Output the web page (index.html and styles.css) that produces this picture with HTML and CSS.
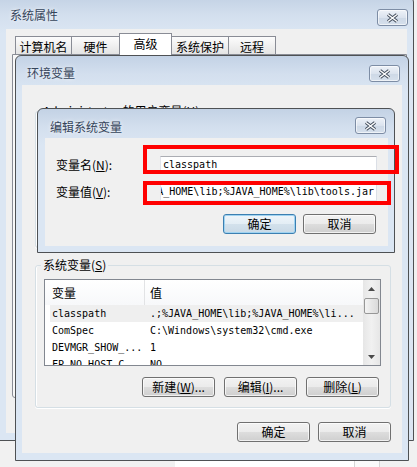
FILE: index.html
```html
<!DOCTYPE html>
<html lang="zh-CN">
<head>
<meta charset="utf-8">
<title>环境变量</title>
<link rel="stylesheet" href="styles.css">
</head>
<body>
<div class="desktop">
  <section class="win win-sys">
    <div class="titlebar">
      <span class="title">系统属性</span>
      <span class="close"><svg width="13" height="10" viewBox="0 0 13 10"><path d="M2 1.5 L11 8.5 M11 1.5 L2 8.5" stroke="#3f4a59" stroke-width="3.4"/><path d="M2 1.5 L11 8.5 M11 1.5 L2 8.5" stroke="#fff" stroke-width="1.5"/></svg></span>
    </div>
    <div class="client sys-client">
      <div class="tabs">
        <span class="tab tab-a">计算机名</span>
        <span class="tab tab-b">硬件</span>
        <span class="tab tab-sel">高级</span>
        <span class="tab tab-c">系统保护</span>
        <span class="tab tab-d">远程</span>
      </div>
      <div class="panel"></div>
    </div>
  </section>

  <section class="win win-env">
    <div class="titlebar">
      <span class="title">环境变量</span>
      <span class="close"><svg width="13" height="10" viewBox="0 0 13 10"><path d="M2 1.5 L11 8.5 M11 1.5 L2 8.5" stroke="#3f4a59" stroke-width="3.4"/><path d="M2 1.5 L11 8.5 M11 1.5 L2 8.5" stroke="#fff" stroke-width="1.5"/></svg></span>
    </div>
    <div class="client env-client">
      <fieldset class="group user-group"><legend>Administrator 的用户变量(<u>U</u>)</legend></fieldset>
      <fieldset class="group sys-group">
        <legend>系统变量(<u>S</u>)</legend>
        <div class="list">
          <div class="list-body">
            <div class="list-head"><span class="hcell hcell-1">变量</span><span class="hcell hcell-2">值</span></div>
            <div class="row row-sel"><span class="cell">classpath</span><span class="cell">.;%JAVA_HOME\lib;%JAVA_HOME%\li...</span></div>
            <div class="row"><span class="cell">ComSpec</span><span class="cell">C:\Windows\system32\cmd.exe</span></div>
            <div class="row"><span class="cell">DEVMGR_SHOW_...</span><span class="cell">1</span></div>
            <div class="row"><span class="cell">FP_NO_HOST_C...</span><span class="cell">NO</span></div>
          </div>
          <div class="scrollbar">
            <span class="sb-btn"><svg width="7" height="4" viewBox="0 0 7 4"><path d="M0 4 L3.5 0 L7 4Z" fill="#4a4a4a"/></svg></span>
            <span class="sb-thumb"></span>
            <span class="sb-track"></span>
            <span class="sb-btn"><svg width="7" height="4" viewBox="0 0 7 4"><path d="M0 0 L3.5 4 L7 0Z" fill="#4a4a4a"/></svg></span>
          </div>
        </div>
        <div class="btnrow group-btns">
          <span class="btn">新建(<u>W</u>)...</span>
          <span class="btn">编辑(<u>I</u>)...</span>
          <span class="btn">删除(<u>L</u>)</span>
        </div>
      </fieldset>
      <div class="btnrow footer-btns">
        <span class="btn">确定</span>
        <span class="btn">取消</span>
      </div>
    </div>
  </section>

  <section class="win win-edit">
    <div class="titlebar">
      <span class="title">编辑系统变量</span>
      <span class="close"><svg width="13" height="10" viewBox="0 0 13 10"><path d="M2 1.5 L11 8.5 M11 1.5 L2 8.5" stroke="#3f4a59" stroke-width="3.4"/><path d="M2 1.5 L11 8.5 M11 1.5 L2 8.5" stroke="#fff" stroke-width="1.5"/></svg></span>
    </div>
    <div class="client edit-client">
      <div class="field"><span class="label">变量名(<u>N</u>):</span><span class="input"><span class="val">classpath</span></span></div>
      <div class="field field-2"><span class="label">变量值(<u>V</u>):</span><span class="input input-end"><span class="val">.;%JAVA_HOME\lib;%JAVA_HOME%\lib\tools.jar</span></span></div>
      <div class="btnrow edit-btns">
        <span class="btn btn-default">确定</span>
        <span class="btn">取消</span>
      </div>
    </div>
  </section>

  <div class="mark mark-name"></div>
  <div class="mark mark-value"></div>
  <div class="under"><span class="under-a"></span><span class="under-b"></span></div>
</div>
</body>
</html>
```

FILE: styles.css
```css
* { box-sizing: border-box; }
html, body { margin: 0; padding: 0; }
body {
  width: 417px;
  height: 467px;
  overflow: hidden;
  background: #f1f1f1;
  font-family: "Noto Sans CJK SC", "Liberation Sans", sans-serif;
  font-size: 12px;
  line-height: 14px;
  color: #000;
}
u { text-decoration: underline; text-underline-offset: 1px; }

.desktop { position: relative; width: 417px; height: 467px; overflow: hidden; }

/* window frames */
.win {
  position: absolute;
  display: flex;
  flex-direction: column;
  border: 1px solid #4e5154;
  border-radius: 6px 6px 0 0;
  background: linear-gradient(to bottom, #c3d2e5 0, #d3dfee 18px, #dbe6f3 36px, #dbe6f3 100%);
}
.win-sys { left: -2px; top: -4px; width: 416px; height: 445px; padding: 0 6px 7px 7px; }
.win-env { left: 15px; top: 55px; width: 394px; height: 406px; padding: 0 6px 7px 6px; }
.win-edit { left: 37px; top: 108px; width: 358px; height: 145px; padding: 0 6px 6px 7px; }

.titlebar { flex: none; display: flex; align-items: flex-start; justify-content: space-between; }
.title { color: #35445a; font-size: 12px; line-height: 14px; text-shadow: 0 0 4px rgba(255,255,255,0.9); }
.win-sys .titlebar { height: 32px; }
.win-sys .title { margin: 11px 0 0 4px; }
.win-sys .close { margin: 12px -1px 0 0; }
.win-env .titlebar { height: 29px; }
.win-env .title { margin: 10px 0 0 5px; }
.win-env .close { margin: 9px 2px 0 0; }
.win-edit .titlebar { height: 29px; }
.win-edit .title { margin: 11px 0 0 5px; }
.win-edit .close { margin: 8px 2px 0 0; }

.close {
  width: 31px;
  height: 17px;
  border: 1px solid #7d8da5;
  border-radius: 3px;
  background: linear-gradient(to bottom, #eef2f8 0%, #dbe3ee 50%, #cdd8e6 51%, #d6e0ec 100%);
  box-shadow: inset 0 0 0 1px rgba(255,255,255,0.6);
  display: flex;
  align-items: center;
  justify-content: center;
}

.client { flex: 1; background: #f0f0f0; display: flex; flex-direction: column; min-height: 0; }

/* system properties */
.sys-client { padding: 0 0 35px 6px; }
.tabs { flex: none; height: 25px; display: flex; align-items: flex-end; padding-left: 3px; }
.tab {
  height: 18px;
  border: 1px solid #898c95;
  border-bottom: none;
  background: linear-gradient(to bottom, #fcfcfc, #e4e4e4);
  text-align: center;
  line-height: 16px;
  padding-top: 2px;
  margin-left: -1px;
}
.tab-a { width: 57px; margin-left: 0; }
.tab-b { width: 49px; }
.tab-c { width: 58px; }
.tab-d { width: 48px; }
.tab-sel {
  position: relative;
  z-index: 1;
  width: 53px;
  height: 22px;
  margin-bottom: -1px;
  background: #fff;
  line-height: 18px;
  padding-top: 1px;
}
.panel { flex: 1; border: 1px solid #898c95; background: #f8f8f8; border-radius: 0 0 0 3px; }

/* env client */
.env-client { padding: 0 11px 0 13px; }
fieldset.group {
  margin: 0;
  min-width: 0;
  border: 1px solid #d5dfe5;
  border-radius: 3px;
  box-shadow: 0 1px 0 #fff, inset 1px 0 0 #fff;
  padding: 7px 9px 10px 8px;
}
fieldset.group legend { padding: 0 2px; margin-left: -3px; line-height: 14px; }
.user-group { margin-top: 19px !important; height: 144px; }
.sys-group { margin-top: 10px !important; height: 150px; }

.list {
  height: 87px;
  border: 1px solid #828790;
  background: #fff;
  display: flex;
}
.list-body { flex: 1; overflow: hidden; min-width: 0; }
.list-head {
  height: 25px;
  display: flex;
  background: linear-gradient(to bottom, #ffffff, #f7f8fa);
}
.hcell { display: flex; align-items: center; }
.hcell-1 { width: 100px; padding-left: 7px; border-right: 1px solid #e2e3e5; }
.hcell-2 { flex: 1; padding-left: 5px; }

.row {
  height: 17px;
  margin-left: 5px;
  display: grid;
  grid-template-columns: 98px 1fr;
  font-family: "DejaVu Sans Mono", "Liberation Mono", monospace;
  font-size: 10px;
  line-height: 17px;
  white-space: nowrap;
}
.row-sel { background: #efefef; }
.cell { padding-left: 2px; overflow: hidden; }

.scrollbar {
  width: 17px;
  flex: none;
  display: flex;
  flex-direction: column;
  background: linear-gradient(to right, #e6e6e6, #f1f1f1 50%, #e6e6e6);
}
.sb-btn { height: 17px; flex: none; display: flex; align-items: center; justify-content: center; }
.sb-thumb {
  height: 16px;
  margin: 1px 1px 0 1px;
  flex: none;
  border: 1px solid #979797;
  border-radius: 2px;
  background: linear-gradient(to right, #f4f4f4, #e6e6e6 50%, #dadada);
}
.sb-track { flex: 1; }

.btnrow { display: flex; justify-content: flex-end; }
.group-btns { margin-top: 11px; gap: 9px; margin-right: 2px; }
.footer-btns { margin-top: 14px; gap: 8px; }
.btn {
  width: 73px;
  height: 20px;
  flex: none;
  display: flex;
  align-items: center;
  justify-content: center;
  border: 1px solid #707070;
  border-radius: 3px;
  background: linear-gradient(to bottom, #f2f2f2 0%, #ebebeb 50%, #dddddd 51%, #cfcfcf 100%);
  box-shadow: inset 0 0 0 1px rgba(255,255,255,0.7);
  line-height: 14px;
}
.btn-default {
  border-color: #3c7fb1;
  background: linear-gradient(to bottom, #eef5fa 0%, #e3edf5 50%, #d3e1ec 51%, #c9d9e6 100%);
  box-shadow: inset 0 0 0 1px #9fd3f1;
}

/* edit dialog */
.edit-client { padding: 18px 11px 0 11px; }
.field { display: flex; align-items: center; height: 18px; }
.field-2 { margin-top: 9px; }
.label { flex: 1; }
.input {
  width: 217px;
  height: 18px;
  background: #fff;
  border: 1px solid;
  border-color: #abadb3 #dbdfe6 #e3e9ef #e2e3ea;
  display: flex;
  align-items: center;
  padding: 0 2px;
  overflow: hidden;
  white-space: nowrap;
  font-family: "DejaVu Sans Mono", "Liberation Mono", monospace;
  font-size: 10px;
}
.input-end { justify-content: flex-end; }
.val { flex: none; }
.edit-btns { margin-top: 13px; gap: 7px; margin-right: 1px; }

/* red annotation boxes */
.mark { position: absolute; border: 4px solid #ff0000; z-index: 5; }
.mark-name { left: 143px; top: 145px; width: 256px; height: 29px; }
.mark-value { left: 143px; top: 181px; width: 248px; height: 24px; }

.under { position: absolute; left: 175px; top: 461px; height: 6px; display: flex; }
.under-a { width: 180px; background: #fff; border-right: 1px solid #d6d6d6; }
.under-b { width: 25px; background: #fafafa; border-right: 1px solid #d6d6d6; }
```
